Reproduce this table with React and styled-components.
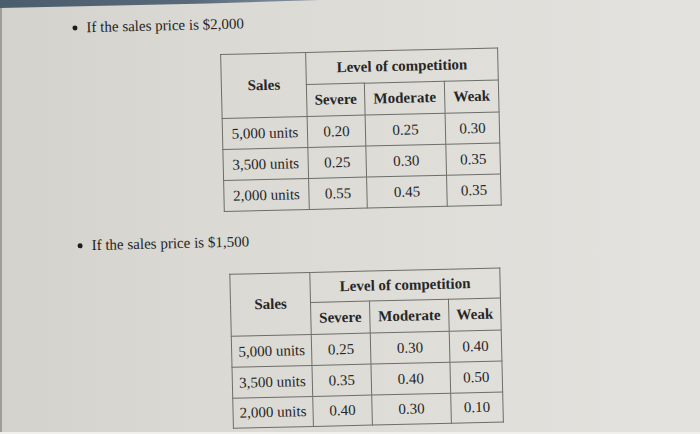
import React from 'react';
import styled, { createGlobalStyle } from 'styled-components';

const Global = createGlobalStyle`
  html, body { margin: 0; padding: 0; background: #dcdbd6; }
  body { font-family: "Liberation Serif", "Times New Roman", serif; }
`;

const Page = styled.div`
  position: relative;
  width: 700px;
  height: 434px;
  overflow: hidden;
  background: linear-gradient(90deg, #d3d2cd 0%, #dad9d4 30%, #dfded9 65%, #e3e2de 100%);
  box-shadow: inset 2px 0 0 #9d9c96;
  &::before {
    content: '';
    position: absolute;
    left: 0;
    top: 0;
    width: 320px;
    height: 9px;
    background: linear-gradient(90deg, #4a5d6d, #58697a 60%, #8795a0);
    clip-path: polygon(0 0, 100% 0, 65% 40%, 0 88%);
    z-index: 2;
  }
  &::after {
    content: '';
    position: absolute;
    left: 0;
    right: 0;
    bottom: 0;
    height: 2px;
    background: #f1f0ed;
  }
`;

const Sheet = styled.div`
  width: 700px;
  height: 434px;
  box-sizing: border-box;
  padding-top: 12px;
  transform: rotate(-1.35deg);
  transform-origin: 350px 217px;
  color: #252525;
  font-size: 15px;
`;

const Bullet = styled.div`
  display: flex;
  align-items: center;
  gap: 9px;
  height: 18px;
  line-height: 18px;
  padding-left: 77px;
  margin-top: ${p => p.$top || 0}px;
`;

const Dot = styled.span`
  width: 5px;
  height: 5px;
  border-radius: 50%;
  background: #1e1e1e;
  flex: none;
`;

const Grid = styled.table`
  border-collapse: collapse;
  table-layout: fixed;
  width: ${p => p.$w}px;
  margin: ${p => p.$top}px 0 0 ${p => p.$left}px;
  font-size: 15px;
  color: #262626;
`;

const Col = styled.col`
  width: ${p => p.$w}px;
`;

const Row = styled.tr`
  height: ${p => p.$h}px;
`;

const Head = styled.th`
  border: 1px solid #6d6d6a;
  padding: 0;
  font-weight: bold;
  text-align: center;
  vertical-align: middle;
`;

const Cell = styled.td`
  border: 1px solid #6d6d6a;
  padding: 0;
  text-align: center;
  vertical-align: middle;
`;

const tables = [
  {
    price: '$2,000',
    w: 277,
    left: 224,
    top: 21,
    cols: [85, 58, 80, 54],
    rows: [32, 32, 31, 31, 31],
    data: [
      ['5,000 units', '0.20', '0.25', '0.30'],
      ['3,500 units', '0.25', '0.30', '0.35'],
      ['2,000 units', '0.55', '0.45', '0.35'],
    ],
  },
  {
    price: '$1,500',
    w: 270,
    left: 228,
    top: 23,
    cols: [80, 59, 79, 52],
    rows: [30, 32, 31, 31, 30],
    data: [
      ['5,000 units', '0.25', '0.30', '0.40'],
      ['3,500 units', '0.35', '0.40', '0.50'],
      ['2,000 units', '0.40', '0.30', '0.10'],
    ],
  },
];

function Scenario({ t, first }) {
  return (
    <>
      <Bullet $top={first ? 0 : 21}>
        <Dot />
        <span>If the sales price is {t.price}</span>
      </Bullet>
      <Grid $w={t.w} $left={t.left} $top={t.top}>
        <colgroup>
          {t.cols.map((c, i) => (
            <Col key={i} $w={c} />
          ))}
        </colgroup>
        <tbody>
          <Row $h={t.rows[0]}>
            <Head rowSpan={2}>Sales</Head>
            <Head colSpan={3}>Level of competition</Head>
          </Row>
          <Row $h={t.rows[1]}>
            <Head>Severe</Head>
            <Head>Moderate</Head>
            <Head>Weak</Head>
          </Row>
          {t.data.map((r, i) => (
            <Row key={i} $h={t.rows[i + 2]}>
              {r.map((v, j) => (
                <Cell key={j}>{v}</Cell>
              ))}
            </Row>
          ))}
        </tbody>
      </Grid>
    </>
  );
}

export default function App() {
  return (
    <>
      <Global />
      <Page>
        <Sheet>
          {tables.map((t, i) => (
            <Scenario key={i} t={t} first={i === 0} />
          ))}
        </Sheet>
      </Page>
    </>
  );
}
